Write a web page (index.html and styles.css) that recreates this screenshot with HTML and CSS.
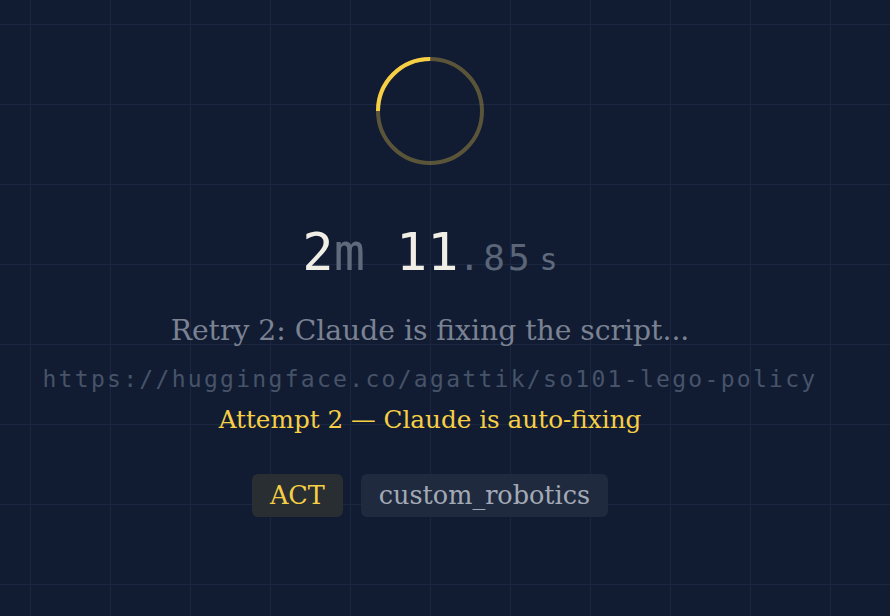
FILE: index.html
```html
<!DOCTYPE html>
<html>
<head>
<meta charset="utf-8">
<link rel="stylesheet" href="styles.css">
</head>
<body>
<div class="stage">
  <svg class="ring" width="112" height="112" viewBox="0 0 112 112">
    <circle class="track" cx="56" cy="56" r="52"></circle>
    <circle class="arc" cx="56" cy="56" r="52" transform="rotate(180 56 56)"></circle>
  </svg>
  <div class="timer">
    <span class="big">2</span><span class="unit">m</span>
    <span class="big sec">11</span><span class="frac">.85</span><span class="unit-s">s</span>
  </div>
  <div class="status">Retry 2: Claude is fixing the script...</div>
  <div class="url">https://huggingface.co/agattik/so101-lego-policy</div>
  <div class="attempt">Attempt 2 — Claude is auto-fixing</div>
  <div class="tags">
    <span class="tag tag-act">ACT</span>
    <span class="tag tag-env">custom_robotics</span>
  </div>
</div>
</body>
</html>
```
FILE: styles.css
```css
html, body {
  margin: 0;
  padding: 0;
}
body {
  width: 890px;
  height: 616px;
  overflow: hidden;
  background-color: #111c33;
  background-image:
    linear-gradient(to right, #1b2740 0, #1b2740 1.5px, transparent 1.5px),
    linear-gradient(to bottom, #1b2740 0, #1b2740 1.5px, transparent 1.5px);
  background-size: 80px 80px;
  background-position: 30px 24px;
}
.stage {
  width: 860px;
  display: flex;
  flex-direction: column;
  align-items: center;
}
.ring {
  margin-top: 55px;
  display: block;
}
.ring circle {
  fill: none;
  stroke-width: 4;
}
.track {
  stroke: rgba(245, 205, 70, 0.32);
}
.arc {
  stroke: #f7cf45;
  stroke-dasharray: 81.7 326.7;
}
.timer {
  margin-top: 57px;
  display: flex;
  align-items: baseline;
  font-family: "DejaVu Sans Mono", monospace;
  line-height: 56px;
  height: 56px;
}
.big {
  font-size: 52px;
  color: #f1eee6;
}
.unit {
  font-size: 52px;
  color: #5f6a7d;
  margin-right: 31px;
}
.frac {
  font-size: 36px;
  color: #5a6578;
  letter-spacing: 3px;
}
.unit-s {
  font-size: 30px;
  color: #5f6a7d;
  margin-left: 7px;
}
.status {
  margin-top: 33px;
  font-family: "DejaVu Serif", serif;
  font-size: 28.2px;
  line-height: 36px;
  color: #7b8292;
}
.url {
  margin-top: 14px;
  font-family: "DejaVu Sans Mono", monospace;
  font-size: 23px;
  letter-spacing: 2.3px;
  line-height: 32px;
  color: #475368;
}
.attempt {
  margin-top: 9px;
  font-family: "DejaVu Serif", serif;
  font-size: 24.7px;
  line-height: 32px;
  color: #f7cf45;
}
.tags {
  margin-top: 38px;
  display: flex;
  gap: 18px;
}
.tag {
  font-family: "DejaVu Serif", serif;
  font-size: 25.5px;
  line-height: 43px;
  height: 43px;
  padding: 0 18px;
  border-radius: 6px;
}
.tag-act {
  background: #292e32;
  color: #f7cf45;
}
.tag-env {
  background: #1f2a3f;
  color: #a3aab6;
}
```
